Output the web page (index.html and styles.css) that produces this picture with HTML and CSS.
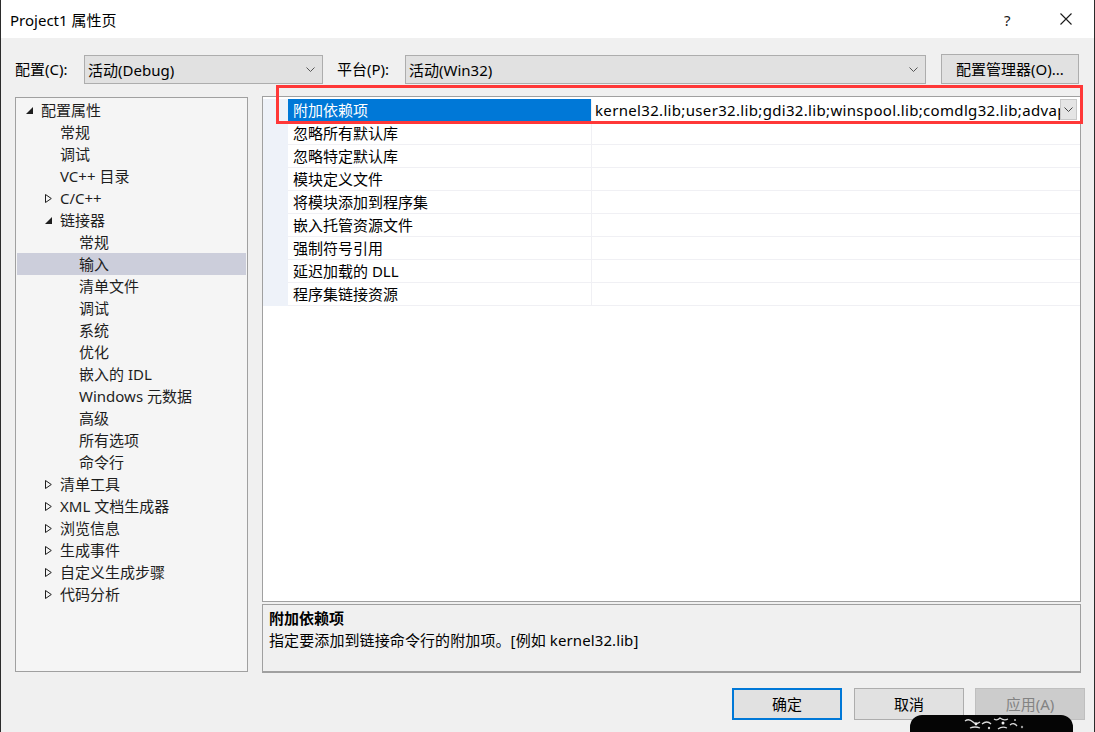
FILE: index.html
```html
<!DOCTYPE html>
<html lang="zh-CN">
<head>
<meta charset="utf-8">
<title>Project1 属性页</title>
<link rel="stylesheet" href="styles.css">
</head>
<body>
<div class="window">
  <div class="titlebar">
    <span class="title">Project1 属性页</span>
    <span class="help">?</span>
    <span class="close">
      <svg width="12" height="12" viewBox="0 0 12 12"><path d="M0.5 0.5 L11.5 11.5 M11.5 0.5 L0.5 11.5" stroke="#1a1a1a" stroke-width="1.1" fill="none"/></svg>
    </span>
  </div>

  <div class="main">
    <div class="toprow">
      <span class="lbl lbl-config">配置(C):</span>
      <div class="select sel-config">
        <span>活动(Debug)</span>
        <svg class="chev" width="9" height="5" viewBox="0 0 9 5"><path d="M0.5 0.5 L4.5 4.5 L8.5 0.5" stroke="#555" fill="none"/></svg>
      </div>
      <span class="lbl lbl-platform">平台(P):</span>
      <div class="select sel-platform">
        <span>活动(Win32)</span>
        <svg class="chev" width="9" height="5" viewBox="0 0 9 5"><path d="M0.5 0.5 L4.5 4.5 L8.5 0.5" stroke="#555" fill="none"/></svg>
      </div>
      <div class="btn btn-manager">配置管理器(O)...</div>
    </div>

    <div class="content">
      <div class="tree">
        <div class="node l0"><span class="arr"><svg width="7" height="7" viewBox="0 0 7 7"><polygon points="7,0 7,7 0,7" fill="#1e1e1e"/></svg></span>配置属性</div>
        <div class="node l1"><span class="arr"></span>常规</div>
        <div class="node l1"><span class="arr"></span>调试</div>
        <div class="node l1"><span class="arr"></span>VC++ 目录</div>
        <div class="node l1"><span class="arr"><svg width="7" height="9" viewBox="0 0 7 9"><polygon points="0.5,0.5 6.3,4.5 0.5,8.5" fill="none" stroke="#1e1e1e"/></svg></span>C/C++</div>
        <div class="node l1"><span class="arr"><svg width="7" height="7" viewBox="0 0 7 7"><polygon points="7,0 7,7 0,7" fill="#1e1e1e"/></svg></span>链接器</div>
        <div class="node l2"><span class="arr"></span>常规</div>
        <div class="node l2 selected"><span class="arr"></span>输入</div>
        <div class="node l2"><span class="arr"></span>清单文件</div>
        <div class="node l2"><span class="arr"></span>调试</div>
        <div class="node l2"><span class="arr"></span>系统</div>
        <div class="node l2"><span class="arr"></span>优化</div>
        <div class="node l2"><span class="arr"></span>嵌入的 IDL</div>
        <div class="node l2"><span class="arr"></span>Windows 元数据</div>
        <div class="node l2"><span class="arr"></span>高级</div>
        <div class="node l2"><span class="arr"></span>所有选项</div>
        <div class="node l2"><span class="arr"></span>命令行</div>
        <div class="node l1"><span class="arr"><svg width="7" height="9" viewBox="0 0 7 9"><polygon points="0.5,0.5 6.3,4.5 0.5,8.5" fill="none" stroke="#1e1e1e"/></svg></span>清单工具</div>
        <div class="node l1"><span class="arr"><svg width="7" height="9" viewBox="0 0 7 9"><polygon points="0.5,0.5 6.3,4.5 0.5,8.5" fill="none" stroke="#1e1e1e"/></svg></span>XML 文档生成器</div>
        <div class="node l1"><span class="arr"><svg width="7" height="9" viewBox="0 0 7 9"><polygon points="0.5,0.5 6.3,4.5 0.5,8.5" fill="none" stroke="#1e1e1e"/></svg></span>浏览信息</div>
        <div class="node l1"><span class="arr"><svg width="7" height="9" viewBox="0 0 7 9"><polygon points="0.5,0.5 6.3,4.5 0.5,8.5" fill="none" stroke="#1e1e1e"/></svg></span>生成事件</div>
        <div class="node l1"><span class="arr"><svg width="7" height="9" viewBox="0 0 7 9"><polygon points="0.5,0.5 6.3,4.5 0.5,8.5" fill="none" stroke="#1e1e1e"/></svg></span>自定义生成步骤</div>
        <div class="node l1"><span class="arr"><svg width="7" height="9" viewBox="0 0 7 9"><polygon points="0.5,0.5 6.3,4.5 0.5,8.5" fill="none" stroke="#1e1e1e"/></svg></span>代码分析</div>
      </div>

      <div class="rightcol">
        <div class="grid">
          <div class="rows">
            <div class="row selected">
              <div class="gut"></div>
              <div class="name">附加依赖项</div>
              <div class="value">
                <span class="vtext">kernel32.lib;user32.lib;gdi32.lib;winspool.lib;comdlg32.lib;advap</span>
                <span class="ddbtn"><svg width="9" height="5" viewBox="0 0 9 5"><path d="M0.5 0.5 L4.5 4.5 L8.5 0.5" stroke="#444" fill="none"/></svg></span>
              </div>
            </div>
            <div class="row"><div class="gut"></div><div class="name">忽略所有默认库</div><div class="value"></div></div>
            <div class="row"><div class="gut"></div><div class="name">忽略特定默认库</div><div class="value"></div></div>
            <div class="row"><div class="gut"></div><div class="name">模块定义文件</div><div class="value"></div></div>
            <div class="row"><div class="gut"></div><div class="name">将模块添加到程序集</div><div class="value"></div></div>
            <div class="row"><div class="gut"></div><div class="name">嵌入托管资源文件</div><div class="value"></div></div>
            <div class="row"><div class="gut"></div><div class="name">强制符号引用</div><div class="value"></div></div>
            <div class="row"><div class="gut"></div><div class="name">延迟加载的 DLL</div><div class="value"></div></div>
            <div class="row"><div class="gut"></div><div class="name">程序集链接资源</div><div class="value"></div></div>
          </div>
        </div>
        <div class="desc">
          <div class="desc-title">附加依赖项</div>
          <div class="desc-text">指定要添加到链接命令行的附加项。[例如 kernel32.lib]</div>
        </div>
      </div>
    </div>

    <div class="buttons">
      <div class="btn dbtn default">确定</div>
      <div class="btn dbtn">取消</div>
      <div class="btn dbtn disabled">应用(A)</div>
    </div>
  </div>

  <div class="highlight-box"></div>
  <div class="blob">
    <svg width="163" height="17" viewBox="0 0 163 17">
      <path d="M55 6 q4 -3 8 1 q3 3 7 0 M72 9 q5 -4 9 0 M84 4 q3 2 6 -1 q4 3 8 1 M100 10 q4 -3 7 1 M60 13 q5 -2 10 0 M88 14 q4 -3 9 -1" stroke="#d8d8d8" stroke-width="1.3" fill="none"/>
      <circle cx="66" cy="9" r="1.4" fill="#eee"/>
      <circle cx="79" cy="13" r="1.2" fill="#ccc"/>
      <circle cx="93" cy="8" r="1.5" fill="#eee"/>
      <circle cx="105" cy="5" r="1" fill="#bbb"/>
      <circle cx="112" cy="12" r="1.2" fill="#999"/>
    </svg>
  </div>
</div>
</body>
</html>
```

FILE: styles.css
```css
* { box-sizing: border-box; }

html, body {
  margin: 0;
  padding: 0;
  width: 1095px;
  height: 732px;
  overflow: hidden;
  background: #2b2b2b;
}

body {
  position: relative;
  font-family: "Noto Sans", "Noto Sans CJK SC", sans-serif;
  font-size: 15px;
  color: #000;
}

.window {
  width: 1093px;
  height: 732px;
  margin-left: 1px;
  background: #f0f0f0;
  display: flex;
  flex-direction: column;
}

.titlebar {
  height: 38px;
  background: #fff;
  display: flex;
  align-items: center;
  padding-left: 9px;
  flex-shrink: 0;
}

.title {
  font-size: 15px;
  line-height: 20px;
  padding-top: 1px;
}

.help {
  margin-left: auto;
  width: 14px;
  font-size: 15px;
  line-height: 20px;
  color: #1a1a1a;
  padding-top: 1px;
}

.close {
  width: 12px;
  height: 12px;
  margin-left: 42px;
  margin-right: 22px;
  display: flex;
}

.main {
  flex: 1;
  padding: 16px 0 0 14px;
  display: flex;
  flex-direction: column;
}

.toprow {
  height: 30px;
  display: flex;
  align-items: center;
}

.lbl {
  line-height: 20px;
  white-space: nowrap;
}
.lbl-config { width: 69px; }
.lbl-platform { width: 68px; margin-left: 14px; }

.select {
  height: 29px;
  background: #e1e1e1;
  border: 1px solid #adadad;
  display: flex;
  align-items: center;
  padding-left: 3px;
  justify-content: space-between;
  padding-right: 7px;
  line-height: 20px;
  padding-top: 1px;
}
.sel-config { width: 239px; }
.sel-platform { width: 521px; }
.chev { display: block; }

.btn {
  display: flex;
  align-items: center;
  justify-content: center;
  background: #e1e1e1;
  border: 1px solid #adadad;
  line-height: 20px;
  white-space: nowrap;
}

.btn-manager {
  width: 138px;
  height: 30px;
  margin-left: 15px;
}

.content {
  margin-top: 12px;
  display: flex;
  gap: 14px;
  align-items: flex-start;
}

.tree {
  width: 233px;
  height: 575px;
  margin-top: 1px;
  background: #f5f5f5;
  border: 1px solid #a0a0a0;
  padding: 1px;
}

.node {
  height: 22px;
  line-height: 22px;
  display: flex;
  align-items: center;
  color: #1e1e1e;
  white-space: nowrap;
}

.node .arr {
  width: 15px;
  height: 22px;
  display: flex;
  align-items: center;
  flex-shrink: 0;
}

.node.l0 { padding-left: 9px; }
.node.l1 { padding-left: 28px; }
.node.l2 { padding-left: 47px; }

.node.selected { background: #cccedb; }

.rightcol {
  width: 819px;
  display: flex;
  flex-direction: column;
  gap: 2px;
}

.grid {
  height: 506px;
  background: #fff;
  border: 1px solid #a0a0a0;
  padding-top: 2px;
}

.row {
  height: 23px;
  display: flex;
}

.gut {
  width: 25px;
  background: #eef2f9;
  flex-shrink: 0;
}

.name {
  width: 304px;
  padding-left: 5px;
  line-height: 22px;
  border-bottom: 1px solid #f0f0f4;
  border-right: 1px solid #f0f0f4;
  white-space: nowrap;
}

.value {
  flex: 1;
  border-bottom: 1px solid #f0f0f4;
  display: flex;
  align-items: stretch;
  min-width: 0;
}

.row.selected .name {
  background: #0078d7;
  color: #fff;
  border-bottom-color: #0078d7;
}

.row.selected .value {
  border-bottom-color: #fff;
  padding-left: 3px;
  padding-right: 3px;
}

.vtext {
  flex: 1;
  overflow: hidden;
  white-space: nowrap;
  line-height: 22px;
  min-width: 0;
  letter-spacing: 0.33px;
}

.ddbtn {
  width: 17px;
  height: 21px;
  background: #e5e5e5;
  border: 1px solid #c8c8c8;
  display: flex;
  align-items: center;
  justify-content: center;
  flex-shrink: 0;
}

.desc {
  height: 69px;
  background: #f0f0f0;
  border: 1px solid #a0a0a0;
  border-bottom: 2px solid #a0a0a0;
  padding: 2px 6px;
}

.desc-title {
  font-weight: bold;
  line-height: 22px;
}

.desc-text {
  line-height: 22px;
  letter-spacing: 0.1px;
}

.buttons {
  margin-top: 15px;
  display: flex;
  justify-content: flex-end;
  gap: 12px;
  padding-right: 9px;
}

.dbtn {
  width: 110px;
  height: 32px;
}

.dbtn.default {
  border: 2px solid #0078d7;
}

.dbtn.disabled {
  background: #cccccc;
  border-color: #bfbfbf;
  color: #838383;
  margin-left: -1px;
}

.highlight-box {
  position: absolute;
  left: 276px;
  top: 85px;
  width: 807px;
  height: 39px;
  border: 3px solid #ff3838;
  pointer-events: none;
}

.blob {
  position: absolute;
  left: 910px;
  top: 715px;
  width: 163px;
  height: 17px;
  background: #050505;
  border-radius: 12px 12px 0 0;
}
.blob svg { display: block; }
```
